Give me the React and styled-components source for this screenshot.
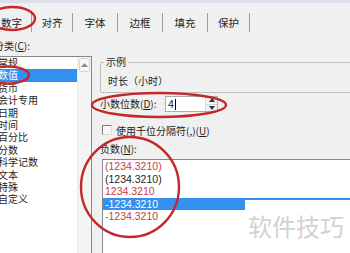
import React from "react";
import styled, { createGlobalStyle } from "styled-components";

const GlobalStyle = createGlobalStyle`
  html, body {
    margin: 0;
    padding: 0;
  }
  body {
    width: 350px;
    height: 253px;
    overflow: hidden;
    background: #f0f0f0;
    font-family: "Noto Sans CJK SC", "Noto Sans", sans-serif;
    color: #1e1e1e;
  }
`;

const categories = ["常规", "数值", "货币", "会计专用", "日期", "时间", "百分比", "分数", "科学记数", "文本", "特殊", "自定义"];

const negatives = [
  { text: "(1234.3210)", red: true },
  { text: "(1234.3210)" },
  { text: "1234.3210", red: true },
  { text: "-1234.3210", selected: true },
  { text: "-1234.3210", red: true },
];

const tabs = [
  { label: "数字", w: 40 },
  { label: "对齐", w: 41 },
  { label: "字体", w: 45 },
  { label: "边框", w: 45 },
  { label: "填充", w: 45 },
  { label: "保护", w: 42 },
];

const App = () => {
  return (
    <Dialog>
      <GlobalStyle />
      <TopEdge />
      <TabStrip>
        {tabs.map((t) => (
          <Tab key={t.label} $w={t.w}>
            {t.label}
          </Tab>
        ))}
      </TabStrip>

      <Body>
        <LeftColumn>
          <Label $indent={2}>
            分类(<u>C</u>):
          </Label>
          <CategoryBox>
            <CategoryItems>
              {categories.map((c, i) => (
                <CategoryRow key={c} $selected={i === 1}>
                  {c}
                </CategoryRow>
              ))}
            </CategoryItems>
            <ScrollTrack>
              <ScrollButton>
                <svg width="7" height="4" viewBox="0 0 7 4">
                  <path d="M0 4 L3.5 0 L7 4 Z" fill="#8a8a8a" />
                </svg>
              </ScrollButton>
            </ScrollTrack>
          </CategoryBox>
        </LeftColumn>

        <RightColumn>
          <SampleGroup>
            <legend>示例</legend>
            <SampleText>时长（小时）</SampleText>
          </SampleGroup>

          <DecimalRow>
            <Label $width={65}>
              小数位数(<u>D</u>):
            </Label>
            <SpinBox>
              <SpinValue>
                4<Caret />
              </SpinValue>
              <SpinButtons>
                <SpinHalf>
                  <svg width="6" height="4" viewBox="0 0 6 4">
                    <path d="M0 4 L3 0 L6 4 Z" fill="#333" />
                  </svg>
                </SpinHalf>
                <SpinHalf>
                  <svg width="6" height="4" viewBox="0 0 6 4">
                    <path d="M0 0 L3 4 L6 0 Z" fill="#333" />
                  </svg>
                </SpinHalf>
              </SpinButtons>
            </SpinBox>
          </DecimalRow>

          <CheckRow>
            <CheckBox />
            <span>
              使用千位分隔符(,)(<u>U</u>)
            </span>
          </CheckRow>

          <Label $top={7}>
            负数(<u>N</u>):
          </Label>
          <NegativeBox>
            {negatives.map((n, i) => (
              <NegativeRow key={i} $red={n.red} $selected={n.selected}>
                {n.text}
              </NegativeRow>
            ))}
          </NegativeBox>
        </RightColumn>
      </Body>

      <Watermark>软件技巧</Watermark>

      <Marks width="350" height="253" viewBox="0 0 350 253">
        <g fill="none" stroke="#c3282d" strokeWidth="2.4">
          <ellipse cx="12" cy="18.5" rx="23" ry="11.5" />
          <ellipse cx="7" cy="75" rx="22" ry="8.5" />
          <ellipse cx="159" cy="105" rx="67" ry="12" />
          <ellipse cx="130" cy="187" rx="49" ry="50" />
        </g>
      </Marks>
    </Dialog>
  );
};

export default App;

const Dialog = styled.div`
  position: relative;
  width: 350px;
  height: 253px;
  overflow: hidden;
  background: #f0f0f0;
`;

const TopEdge = styled.div`
  height: 3px;
  background: #d9e0e8;
`;

const TabStrip = styled.div`
  display: flex;
  align-items: flex-end;
  height: 29px;
  margin-left: -8px;
`;

const Tab = styled.div`
  box-sizing: border-box;
  width: ${(p) => p.$w}px;
  height: 19px;
  display: flex;
  align-items: center;
  justify-content: center;
  font-size: 10.5px;
  color: #222;
  border-right: 1px solid #9c9c9c;
`;

const Body = styled.div`
  display: flex;
  gap: 8px;
  padding-top: 8px;
`;

const Label = styled.div`
  box-sizing: border-box;
  flex-shrink: 0;
  width: ${(p) => (p.$width ? `${p.$width}px` : "auto")};
  margin-top: ${(p) => p.$top || 0}px;
  padding-left: ${(p) => p.$indent || 0}px;
  font-size: 10px;
  line-height: 12px;
  color: #1e1e1e;

  u {
    text-decoration-thickness: 1px;
  }
`;

const LeftColumn = styled.div`
  flex-shrink: 0;
  width: 100px;
  margin-left: -8px;
`;

const CategoryBox = styled.div`
  display: flex;
  height: 220px;
  margin-top: 4px;
  border: 1px solid #828790;
  background: #fff;
`;

const CategoryItems = styled.div`
  flex: 1;
`;

const CategoryRow = styled.div`
  height: 12.4px;
  line-height: 12.4px;
  padding-left: 5px;
  font-size: 10px;
  color: ${(p) => (p.$selected ? "#fff" : "#1e1e1e")};
  background: ${(p) => (p.$selected ? "#3390f0" : "transparent")};
`;

const ScrollTrack = styled.div`
  width: 13px;
  background: #f4f4f4;
  border-left: 1px solid #ececec;
`;

const ScrollButton = styled.div`
  display: flex;
  align-items: center;
  justify-content: center;
  height: 12px;
  margin: 1px;
  border: 1px solid #d6d6d6;
  border-radius: 2px;
  background: #f7f7f7;
`;

const RightColumn = styled.div`
  flex-shrink: 0;
  width: 262px;
  display: flex;
  flex-direction: column;
`;

const SampleGroup = styled.fieldset`
  margin: 16px 0 0;
  padding: 0 0 5px 3px;
  border: 1px solid #bdbdbd;
  border-radius: 2px;

  legend {
    padding: 0 2px;
    font-size: 10px;
    line-height: 12px;
    color: #1e1e1e;
  }
`;

const SampleText = styled.div`
  padding: 7px 0 0 4px;
  font-size: 10px;
  line-height: 12px;
  color: #1e1e1e;
`;

const DecimalRow = styled.div`
  display: flex;
  align-items: center;
  height: 16px;
  margin-top: 3px;
`;

const SpinBox = styled.div`
  display: flex;
  width: 53px;
  height: 16px;
  box-sizing: border-box;
  border: 1px solid #abadb3;
  background: #fff;
`;

const SpinValue = styled.div`
  flex: 1;
  display: flex;
  align-items: center;
  padding-left: 2px;
  font-family: "Liberation Sans", Arial, sans-serif;
  font-size: 10.5px;
  color: #111;
`;

const Caret = styled.span`
  width: 1px;
  height: 11px;
  margin-left: 1px;
  background: #000;
`;

const SpinButtons = styled.div`
  display: flex;
  flex-direction: column;
  width: 11px;
  border-left: 1px solid #dadada;
`;

const SpinHalf = styled.div`
  flex: 1;
  display: flex;
  align-items: center;
  justify-content: center;
  background: #f3f3f3;

  & + & {
    border-top: 1px solid #d0d0d0;
  }
`;

const CheckRow = styled.div`
  display: flex;
  align-items: center;
  gap: 4px;
  height: 12px;
  margin-top: 12px;
  padding-left: 2px;
  font-size: 10px;
  color: #1e1e1e;
`;

const CheckBox = styled.span`
  box-sizing: border-box;
  width: 10px;
  height: 10px;
  border-top: 1px solid #7c7c7c;
  border-left: 1px solid #7c7c7c;
  border-right: 1px solid #dcdcdc;
  border-bottom: 1px solid #dcdcdc;
  background: #f7f7f7;
`;

const NegativeBox = styled.div`
  height: 110px;
  margin: 4px 0 0 2px;
  border: 1px solid #828790;
  border-right: none;
  background: #fff;
`;

const NegativeRow = styled.div`
  height: 12.6px;
  line-height: 12.6px;
  padding-left: 2px;
  font-family: "Liberation Sans", Arial, sans-serif;
  font-size: 10.5px;
  color: ${(p) => (p.$selected ? "#fff" : p.$red ? "#c4403d" : "#1e1e1e")};
  background: ${(p) => (p.$selected ? "#3390f0" : "transparent")};
`;

const Watermark = styled.div`
  position: absolute;
  left: 245px;
  top: 200px;
  right: 0;
  bottom: 0;
  padding: 12px 0 0 3px;
  background: #fff;
  font-family: "Noto Sans CJK SC", sans-serif;
  font-size: 24px;
  line-height: 28px;
  color: #d2d2d2;
  white-space: nowrap;
`;

const Marks = styled.svg`
  position: absolute;
  left: 0;
  top: 0;
  pointer-events: none;
`;
